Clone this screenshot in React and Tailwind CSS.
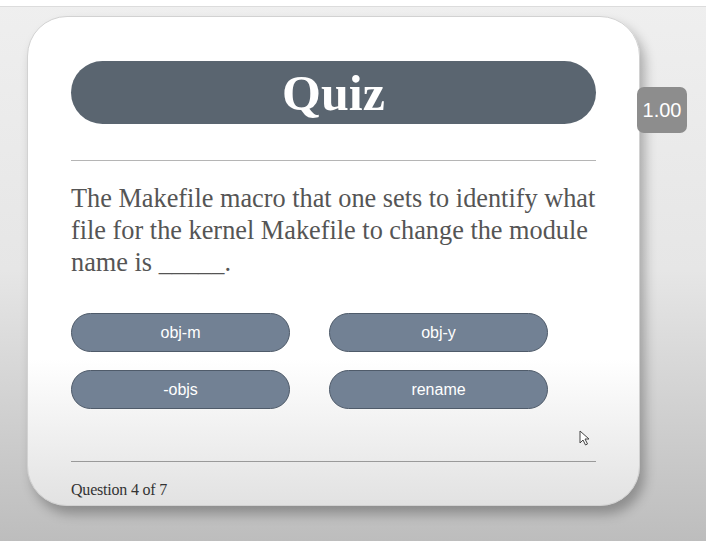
import React from "react";

const answers = ["obj-m", "obj-y", "-objs", "rename"];

function Cursor() {
  return (
    <svg width="12" height="16" viewBox="0 0 12 16" className="absolute left-[579px] top-[430px]">
      <path d="M1 1 L1 13 L4 10 L6.5 15 L8.5 14 L6 9 L10 9 Z" fill="#fff" stroke="#444" strokeWidth="1" strokeLinejoin="round" />
    </svg>
  );
}

export default function App() {
  return (
    <div className="relative h-[541px] w-[706px] overflow-hidden bg-gradient-to-b from-[#efefef] via-[#e6e6e6] to-[#bdbdbd]">
      {/* top strip */}
      <div className="h-[7px] border-b border-[#dcdcdc] bg-white" />

      {/* card */}
      <div className="ml-[27px] mt-[9px] flex h-[490px] w-[613px] flex-col rounded-[40px] border border-[#d2d2d2] bg-gradient-to-b from-white via-white via-70% to-[#e2e2e2] px-[43px] pt-[44px] shadow-[5px_8px_12px_rgba(0,0,0,0.28)]">
        <div className="flex h-[63px] items-center justify-center rounded-full bg-[#5a6570]">
          <span className="font-['Liberation_Serif',serif] text-[50px] font-bold leading-none text-white">Quiz</span>
        </div>

        <div className="mt-[36px] h-px bg-[#b5b5b5]" />

        <p className="mt-[22px] font-['Liberation_Serif',serif] text-[26.3px] leading-[32px] text-[#555]">
          The Makefile macro that one sets to identify what file for the kernel Makefile to change the module name is _____.
        </p>

        <div className="mt-[34px] grid w-[477px] grid-cols-2 gap-x-[39px] gap-y-[18px]">
          {answers.map((a) => (
            <button
              key={a}
              className="h-[39px] rounded-full border border-[#4f5b6a] bg-[#728194] font-['Liberation_Sans',sans-serif] text-[16px] text-white"
            >
              {a}
            </button>
          ))}
        </div>

        <div className="mt-[52px] h-px bg-[#9a9a9a]" />

        <div className="mt-[16px] font-['Liberation_Serif',serif] text-[16px] tracking-[-0.2px] text-[#333]">
          Question 4 of 7
        </div>
      </div>

      {/* timer badge */}
      <div className="absolute left-[637px] top-[87px] flex h-[46px] w-[50px] items-center justify-center rounded-[7px] bg-[#8d8d8d] font-['Liberation_Sans',sans-serif] text-[20px] text-white">
        1.00
      </div>

      <Cursor />
    </div>
  );
}
